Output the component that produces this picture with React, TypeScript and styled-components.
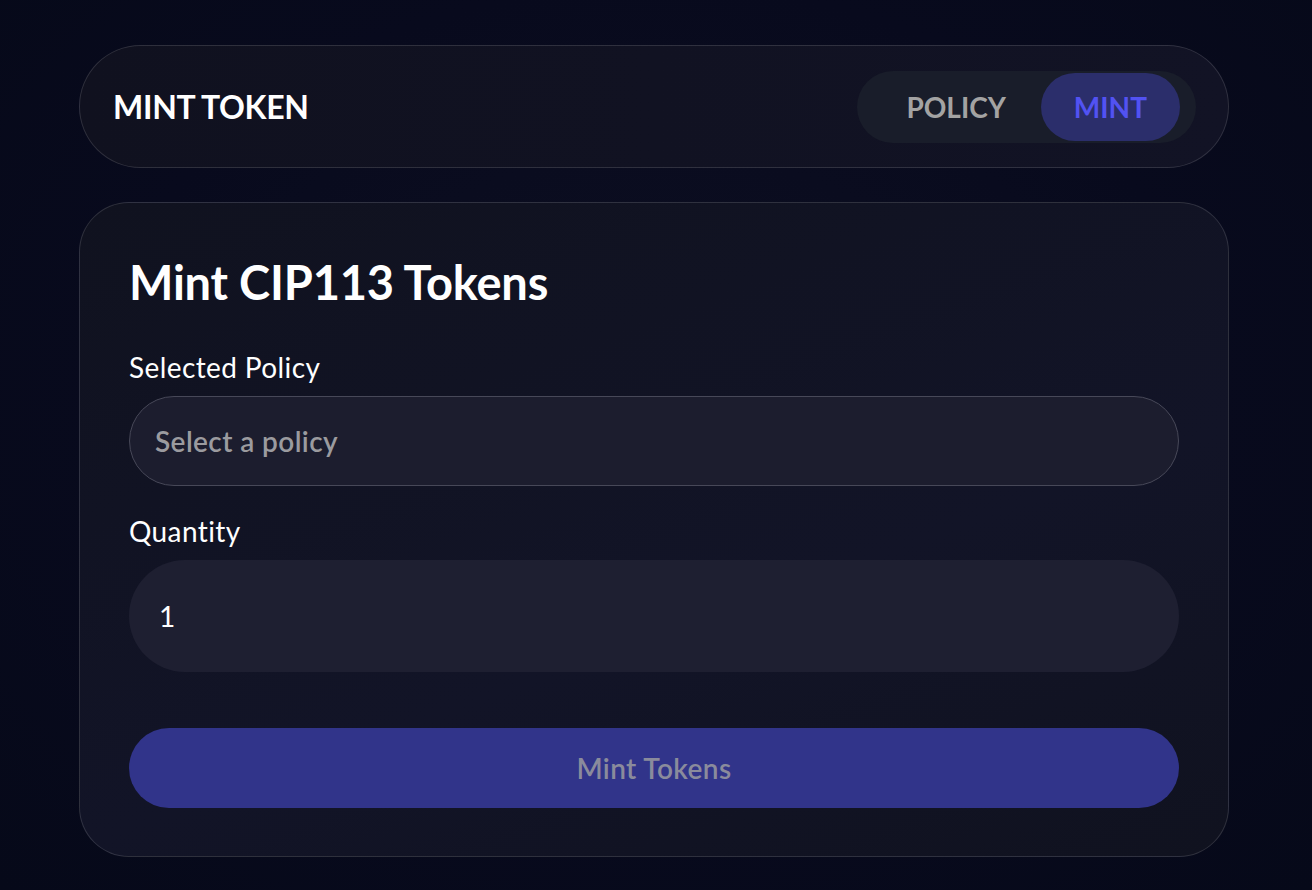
import React, { useState } from "react";
import styled, { createGlobalStyle } from "styled-components";

const Global = createGlobalStyle`
  * { box-sizing: border-box; }
  html, body { margin: 0; padding: 0; }
  body {
    background: radial-gradient(ellipse at 50% 45%, #0d0f22 0%, #080a1d 60%, #060919 100%);
    min-height: 890px;
    font-family: "Lato", "Inter", sans-serif;
    color: #ffffff;
  }
`;

const Page = styled.div`
  width: 1150px;
  margin-left: 79px;
  padding-top: 45px;
  display: flex;
  flex-direction: column;
  gap: 34px;
`;

const Header = styled.header`
  height: 123px;
  border: 1px solid rgba(255, 255, 255, 0.13);
  border-radius: 62px;
  background: linear-gradient(90deg, #10111f 0%, #121325 100%);
  display: flex;
  align-items: center;
  justify-content: space-between;
  padding: 0 32px 0 33px;
`;

const HeaderTitle = styled.h1`
  margin: 0;
  font-size: 32px;
  font-weight: 700;
  letter-spacing: -0.3px;
  color: #ffffff;
`;

const Toggle = styled.div`
  display: flex;
  align-items: center;
  gap: 2px;
  height: 72px;
  padding: 2px 16px 2px 16px;
  border-radius: 36px;
  background: #191d2a;
`;

const ToggleButton = styled.button<{ $active?: boolean }>`
  height: 68px;
  padding: 0 33px;
  border: none;
  border-radius: 34px;
  font-family: "Lato", sans-serif;
  font-size: 28px;
  font-weight: 700;
  cursor: pointer;
  background: ${(p) => (p.$active ? "#2b2e6b" : "transparent")};
  color: ${(p) => (p.$active ? "#5252f2" : "#a3a3a3")};
`;

const Card = styled.section`
  border: 1px solid rgba(255, 255, 255, 0.13);
  border-radius: 50px;
  background: linear-gradient(160deg, #10121f 0%, #121427 60%, #10121f 100%);
  padding: 50px 49px 48px 49px;
  display: flex;
  flex-direction: column;
`;

const Title = styled.h2`
  margin: 0 0 40px 0;
  font-size: 47px;
  line-height: 58px;
  font-weight: 700;
  letter-spacing: -0.2px;
  color: #ffffff;
`;

const Field = styled.div<{ $spaced?: boolean }>`
  display: flex;
  flex-direction: column;
  gap: 13px;
  margin-bottom: ${(p) => (p.$spaced ? "29px" : "0")};
`;

const Label = styled.label`
  font-size: 28px;
  line-height: 32px;
  font-weight: 400;
  letter-spacing: 0.4px;
  color: #ffffff;
`;

const SelectBox = styled.div`
  height: 90px;
  border: 1px solid #474858;
  border-radius: 45px;
  background: #1c1d2e;
  display: flex;
  align-items: center;
  padding-left: 25px;
  font-size: 28px;
  font-weight: 600;
  letter-spacing: 0.4px;
  color: #9b9b9f;
`;

const Input = styled.input`
  height: 112px;
  border: none;
  outline: none;
  border-radius: 56px;
  background: #1e1f31;
  padding: 0 30px;
  font-family: "Lato", sans-serif;
  font-size: 28px;
  color: #ffffff;
`;

const SubmitButton = styled.button`
  margin-top: 56px;
  height: 80px;
  border: none;
  border-radius: 40px;
  background: #31348a;
  color: #8a8b9c;
  font-family: "Lato", sans-serif;
  font-size: 28px;
  font-weight: 600;
  letter-spacing: 0.4px;
`;

export default function App() {
  const [tab, setTab] = useState("mint");
  return (
    <>
      <Global />
      <Page>
        <Header>
          <HeaderTitle>MINT TOKEN</HeaderTitle>
          <Toggle>
            <ToggleButton $active={tab === "policy"} onClick={() => setTab("policy")}>
              POLICY
            </ToggleButton>
            <ToggleButton $active={tab === "mint"} onClick={() => setTab("mint")}>
              MINT
            </ToggleButton>
          </Toggle>
        </Header>
        <Card>
          <Title>Mint CIP113 Tokens</Title>
          <Field $spaced>
            <Label>Selected Policy</Label>
            <SelectBox>Select a policy</SelectBox>
          </Field>
          <Field>
            <Label>Quantity</Label>
            <Input defaultValue="1" />
          </Field>
          <SubmitButton disabled>Mint Tokens</SubmitButton>
        </Card>
      </Page>
    </>
  );
}
